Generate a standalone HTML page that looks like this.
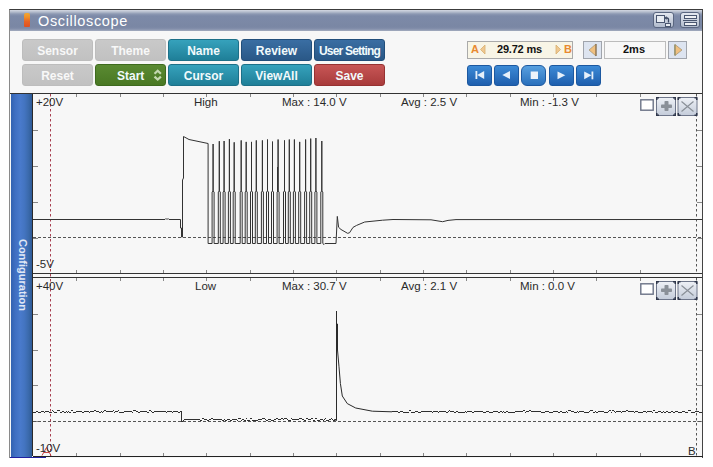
<!DOCTYPE html>
<html><head><meta charset="utf-8">
<style>
*{margin:0;padding:0;box-sizing:border-box}
html,body{width:713px;height:467px;background:#fff;overflow:hidden;font-family:"Liberation Sans",sans-serif;position:relative}
.abs{position:absolute}
#win{position:absolute;left:9px;top:9px;width:694px;height:449px;background:#f7f7f7;border-left:1px solid #8a8a8a;border-right:1px solid #444;border-top:1px solid #3c3c3c}
#title{position:absolute;left:10px;top:10px;width:692px;height:21px;background:linear-gradient(#d4d8e2 0px,#b4bccc 2px,#8c98b2 4px,#7d8aa8 6px,#7a87a4 17px,#8490ac 19px,#a4acbe 21px)}
#title .t{position:absolute;left:28px;top:3px;font-size:14.5px;color:#fff;letter-spacing:0.65px}
.btn{position:absolute;width:71px;height:22px;border-radius:3px;color:#f2fafc;font-weight:bold;font-size:12px;text-align:center;line-height:22px}
.gray{background:linear-gradient(#c9c9c9,#c1c1c1);color:#f8f8f8;border:1px solid #bdbdbd}
.teal{background:linear-gradient(#36a2bc,#1f7f98);border:1px solid #1d7088}
.blue{background:linear-gradient(#3a6ea3,#2a5887);border:1px solid #224e7a}
.green{background:linear-gradient(#5a8a32,#497823);border:1px solid #3e6a1e}
.red{background:linear-gradient(#c85656,#a83b3b);border:1px solid #963232}
.nav{position:absolute;top:64.5px;width:25px;height:21px;border-radius:3px;background:linear-gradient(#3c8ad6,#1f5fae);border:1px solid #1c58a0}
.lbl{position:absolute;font-size:11.5px;color:#2a2a2a;line-height:11px;white-space:nowrap}
.tb{position:absolute;top:2px;width:20px;height:16px;border:1px solid #5a6680;border-radius:3px;background:linear-gradient(#e4e8f0,#b0bacc)}
</style></head><body>
<div id="win"></div>
<div id="title"><div class="abs" style="left:14px;top:3px;width:6px;height:14px;background:linear-gradient(#f4a830 0%,#f09028 30%,#e86424 60%,#e05020 100%);border-radius:2px 2px 1px 1px"></div><div class="t">Oscilloscope</div>
 <div class="tb" style="left:643px;width:21px"><div class="abs" style="left:2px;top:2px;width:9px;height:8px;border:1px solid #4a5670;background:#e8ecf2"></div><div class="abs" style="left:11px;top:10px;width:6px;height:4px;border:1px solid #4a5670;background:#e8ecf2"></div><svg class="abs" style="left:0;top:0" width="21" height="16"><path d="M14.5,9.5 L14.5,6.5 Q14.5,5 13,5 L12,5" fill="none" stroke="#3a4660" stroke-width="1.3"/><path d="M12.5,3 L10.5,5 L12.5,7 Z" fill="#3a4660"/></svg></div>
 <div class="tb" style="left:670px;width:20px"><div class="abs" style="left:3px;top:2px;width:13px;height:4px;border:1px solid #4a5670;background:#eef0f4"></div><div class="abs" style="left:2px;top:7px;width:14px;height:1px;background:#4a5670"></div><div class="abs" style="left:3px;top:9px;width:13px;height:4px;border:1px solid #4a5670;background:#eef0f4"></div></div>
</div>

<div class="btn gray" style="left:22px;top:39px">Sensor</div>
<div class="btn gray" style="left:95px;top:39px">Theme</div>
<div class="btn teal" style="left:168px;top:39px">Name</div>
<div class="btn blue" style="left:241px;top:39px">Review</div>
<div class="btn blue" style="left:314px;top:39px;letter-spacing:-0.8px">User Setting</div>
<div class="btn gray" style="left:22px;top:64px">Reset</div>
<div class="btn green" style="left:95px;top:64px;text-align:left;padding-left:21px">Start</div><svg class="abs" style="left:0;top:0" width="200" height="90"><path d="M154.5,73.8 L157.7,70.8 L160.9,73.8 M154.5,76.6 L157.7,79.6 L160.9,76.6" fill="none" stroke="#c4d8b0" stroke-width="2.2"/></svg>
<div class="btn teal" style="left:168px;top:64px">Cursor</div>
<div class="btn teal" style="left:241px;top:64px">ViewAll</div>
<div class="btn red" style="left:314px;top:64px">Save</div>

<div class="abs" style="left:467px;top:41px;width:106px;height:18px;background:#f8f5e6;border:1px solid #aaaaaa"></div>
<div class="abs" style="left:583px;top:41px;width:19px;height:18px;background:#dde4f0;border:1px solid #a0a4ac"></div>
<div class="abs" style="left:604px;top:41px;width:62px;height:18px;background:#f8f8f8;border:1px solid #bcbcbc"></div>
<div class="abs" style="left:668px;top:41px;width:19px;height:18px;background:#dde4f0;border:1px solid #a0a4ac"></div>
<div class="abs" style="left:471px;top:44px;font-size:11px;font-weight:bold;color:#e88a30;line-height:11px">A</div>
<div class="abs" style="left:497px;top:44px;font-size:11px;font-weight:bold;color:#111;line-height:11px;letter-spacing:-0.2px">29.72 ms</div>
<div class="abs" style="left:564px;top:44px;font-size:11px;font-weight:bold;color:#e88a30;line-height:11px">B</div>
<div class="abs" style="left:623px;top:44px;font-size:11px;font-weight:bold;color:#111;line-height:11px">2ms</div>
<svg class="abs" style="left:0;top:0" width="713" height="90">
 <path d="M485,45 L480.5,49.5 L485,54 Z" fill="#f0c890" stroke="#d8b070" stroke-width="0.8"/>
 <path d="M556,45 L560.5,49.5 L556,54 Z" fill="#f0c890" stroke="#d8b070" stroke-width="0.8"/>
 <path d="M596,44 L589,50 L596,56 Z" fill="#f0c080" stroke="#a09070" stroke-width="0.7"/><rect x="595.5" y="44" width="1" height="12" fill="#7a6040"/>
 <path d="M675,44.5 L682,50 L675,55.5 Z" fill="#f0c080" stroke="#a09070" stroke-width="0.7"/><rect x="674.3" y="44.5" width="1.2" height="11" fill="#8a8a60"/>
</svg>

<div class="nav" style="left:467px"></div>
<div class="nav" style="left:494px"></div>
<div class="nav" style="left:521px;border-radius:6px;background:linear-gradient(#58a0e0,#2a70bc)"></div>
<div class="nav" style="left:549px"></div>
<div class="nav" style="left:576px"></div>
<svg class="abs" style="left:0;top:0" width="713" height="90">
 <rect x="475.5" y="71" width="1.8" height="8" fill="#e6f0fa"/>
 <path d="M484.2,71 L477.2,75 L484.2,79 Z" fill="#e6f0fa"/>
 <path d="M510,71 L502.3,75 L510,79 Z" fill="#e6f0fa"/>
 <rect x="530.7" y="71.5" width="7.3" height="7.5" fill="#eef4fb"/>
 <path d="M557.5,71.5 L565.3,75.3 L557.5,79.3 Z" fill="#e6f0fa"/>
 <path d="M584.2,71.5 L591.5,75.3 L584.2,79.3 Z" fill="#e6f0fa"/>
 <rect x="591.5" y="71.5" width="1.8" height="7.8" fill="#e6f0fa"/>
</svg>

<!-- chart panel -->
<div class="abs" style="left:10px;top:93px;width:692px;height:1px;background:#333"></div>
<div class="abs" style="left:11px;top:94px;width:21px;height:363px;background:linear-gradient(90deg,#3262b0 0%,#3f6fc2 20%,#497acb 45%,#4374c0 65%,#3a69aa 85%,#2e5a96 100%)"></div>
<div class="abs" style="left:32px;top:94px;width:1px;height:362px;background:#2a2a2a"></div>
<div class="abs" style="left:11px;top:240px;width:21px;height:71px;"><div style="position:absolute;left:11.5px;top:34.5px;transform:translate(-50%,-50%) rotate(90deg);font-size:11px;font-weight:bold;color:#e0e8f6;white-space:nowrap;letter-spacing:0px">Configuration</div></div>
<svg class="abs" style="left:0;top:0" width="713" height="467" viewBox="0 0 713 467">
 <rect x="33" y="94" width="669" height="179" fill="#f7f7f7"/>
 <rect x="33" y="278" width="669" height="178" fill="#f7f7f7"/>
 <rect x="33" y="273" width="669" height="1" fill="#333"/>
 <rect x="33" y="277" width="669" height="1" fill="#333"/>
 <rect x="33" y="456" width="670" height="1" fill="#222"/>
 <rect x="10" y="457" width="36" height="1" fill="#2020a0"/>
<rect x="76" y="94" width="1" height="3" fill="#888"/>
<rect x="76" y="270" width="1" height="3" fill="#888"/>
<rect x="76" y="278" width="1" height="3" fill="#888"/>
<rect x="76" y="453" width="1" height="3" fill="#888"/>
<rect x="120" y="94" width="1" height="3" fill="#888"/>
<rect x="120" y="270" width="1" height="3" fill="#888"/>
<rect x="120" y="278" width="1" height="3" fill="#888"/>
<rect x="120" y="453" width="1" height="3" fill="#888"/>
<rect x="163" y="94" width="1" height="3" fill="#888"/>
<rect x="163" y="270" width="1" height="3" fill="#888"/>
<rect x="163" y="278" width="1" height="3" fill="#888"/>
<rect x="163" y="453" width="1" height="3" fill="#888"/>
<rect x="206" y="94" width="1" height="3" fill="#888"/>
<rect x="206" y="270" width="1" height="3" fill="#888"/>
<rect x="206" y="278" width="1" height="3" fill="#888"/>
<rect x="206" y="453" width="1" height="3" fill="#888"/>
<rect x="250" y="94" width="1" height="3" fill="#888"/>
<rect x="250" y="270" width="1" height="3" fill="#888"/>
<rect x="250" y="278" width="1" height="3" fill="#888"/>
<rect x="250" y="453" width="1" height="3" fill="#888"/>
<rect x="293" y="94" width="1" height="3" fill="#888"/>
<rect x="293" y="270" width="1" height="3" fill="#888"/>
<rect x="293" y="278" width="1" height="3" fill="#888"/>
<rect x="293" y="453" width="1" height="3" fill="#888"/>
<rect x="336" y="94" width="1" height="3" fill="#888"/>
<rect x="336" y="270" width="1" height="3" fill="#888"/>
<rect x="336" y="278" width="1" height="3" fill="#888"/>
<rect x="336" y="453" width="1" height="3" fill="#888"/>
<rect x="380" y="94" width="1" height="3" fill="#888"/>
<rect x="380" y="270" width="1" height="3" fill="#888"/>
<rect x="380" y="278" width="1" height="3" fill="#888"/>
<rect x="380" y="453" width="1" height="3" fill="#888"/>
<rect x="423" y="94" width="1" height="3" fill="#888"/>
<rect x="423" y="270" width="1" height="3" fill="#888"/>
<rect x="423" y="278" width="1" height="3" fill="#888"/>
<rect x="423" y="453" width="1" height="3" fill="#888"/>
<rect x="466" y="94" width="1" height="3" fill="#888"/>
<rect x="466" y="270" width="1" height="3" fill="#888"/>
<rect x="466" y="278" width="1" height="3" fill="#888"/>
<rect x="466" y="453" width="1" height="3" fill="#888"/>
<rect x="510" y="94" width="1" height="3" fill="#888"/>
<rect x="510" y="270" width="1" height="3" fill="#888"/>
<rect x="510" y="278" width="1" height="3" fill="#888"/>
<rect x="510" y="453" width="1" height="3" fill="#888"/>
<rect x="553" y="94" width="1" height="3" fill="#888"/>
<rect x="553" y="270" width="1" height="3" fill="#888"/>
<rect x="553" y="278" width="1" height="3" fill="#888"/>
<rect x="553" y="453" width="1" height="3" fill="#888"/>
<rect x="596" y="94" width="1" height="3" fill="#888"/>
<rect x="596" y="270" width="1" height="3" fill="#888"/>
<rect x="596" y="278" width="1" height="3" fill="#888"/>
<rect x="596" y="453" width="1" height="3" fill="#888"/>
<rect x="640" y="94" width="1" height="3" fill="#888"/>
<rect x="640" y="270" width="1" height="3" fill="#888"/>
<rect x="640" y="278" width="1" height="3" fill="#888"/>
<rect x="640" y="453" width="1" height="3" fill="#888"/>
<rect x="33" y="130" width="5" height="1" fill="#888"/>
<rect x="697" y="130" width="5" height="1" fill="#888"/>
<rect x="33" y="166" width="5" height="1" fill="#888"/>
<rect x="697" y="166" width="5" height="1" fill="#888"/>
<rect x="33" y="202" width="5" height="1" fill="#888"/>
<rect x="697" y="202" width="5" height="1" fill="#888"/>
<rect x="33" y="238" width="5" height="1" fill="#888"/>
<rect x="697" y="238" width="5" height="1" fill="#888"/>
<rect x="33" y="314" width="5" height="1" fill="#888"/>
<rect x="697" y="314" width="5" height="1" fill="#888"/>
<rect x="33" y="350" width="5" height="1" fill="#888"/>
<rect x="697" y="350" width="5" height="1" fill="#888"/>
<rect x="33" y="385" width="5" height="1" fill="#888"/>
<rect x="697" y="385" width="5" height="1" fill="#888"/>
<rect x="33" y="421" width="5" height="1" fill="#888"/>
<rect x="697" y="421" width="5" height="1" fill="#888"/>
 <line x1="33" y1="237.5" x2="702" y2="237.5" stroke="#555" stroke-dasharray="3,2"/>
 <line x1="33" y1="421.5" x2="702" y2="421.5" stroke="#555" stroke-dasharray="3,2"/>
 <line x1="50.5" y1="94" x2="50.5" y2="456" stroke="#a84050" stroke-dasharray="2.5,2.5"/>
 <rect x="33" y="273" width="669" height="1" fill="#333"/>
 <rect x="33" y="277" width="669" height="1" fill="#333"/>
 <line x1="696.5" y1="94" x2="696.5" y2="273" stroke="#555" stroke-dasharray="2.5,2.5"/>
 <line x1="696.5" y1="278" x2="696.5" y2="456" stroke="#555" stroke-dasharray="2.5,2.5"/>
 <path d="M33,219.5 165,219.5 166,218.5 167,219.5 168,218.5 169,219.5 180.5,219.5 180.5,228 181.5,228 181.5,237 182.5,237 182.5,180 183.5,178 183.5,136.5 189,139.5 208.1,143.5 208.1,243.5 212.1,243.5 212.1,192 213.1,191 213.1,144 213.1,191 214.1,192 214.1,243.5 218.3,243.5 218.3,192 219.3,191 219.3,141.2 219.3,191 220.3,192 220.3,243.5 223.1,243.5 223.1,192 224.1,191 224.1,141 224.1,191 225.1,192 225.1,243.5 228.4,243.5 228.4,192 229.4,191 229.4,139.1 229.4,191 230.4,192 230.4,243.5 233.2,243.5 233.2,192 234.2,191 234.2,142.3 234.2,191 235.2,192 235.2,243.5 240.2,243.5 240.2,192 241.2,191 241.2,140.4 241.2,191 242.2,192 242.2,243.5 245.2,243.5 245.2,192 246.2,191 246.2,141.9 246.2,191 247.2,192 247.2,243.5 250.5,243.5 250.5,192 251.5,191 251.5,141.9 251.5,191 252.5,192 252.5,243.5 255.3,243.5 255.3,192 256.3,191 256.3,140.4 256.3,191 257.3,192 257.3,243.5 261.4,243.5 261.4,192 262.4,191 262.4,140.4 262.4,191 263.4,192 263.4,243.5 266.5,243.5 266.5,192 267.5,191 267.5,139.5 267.5,191 268.5,192 268.5,243.5 271.5,243.5 271.5,192 272.5,191 272.5,141.6 272.5,191 273.5,192 273.5,243.5 277.1,243.5 277.1,192 278.1,191 278.1,139.5 278.1,191 279.1,192 279.1,243.5 283.5,243.5 283.5,192 284.5,191 284.5,140.4 284.5,191 285.5,192 285.5,243.5 288.3,243.5 288.3,192 289.3,191 289.3,139.5 289.3,191 290.3,192 290.3,243.5 293.4,243.5 293.4,192 294.4,191 294.4,139.5 294.4,191 295.4,192 295.4,243.5 298.7,243.5 298.7,192 299.7,191 299.7,141.9 299.7,191 300.7,192 300.7,243.5 304.6,243.5 304.6,192 305.6,191 305.6,139.5 305.6,191 306.6,192 306.6,243.5 309.7,243.5 309.7,192 310.7,191 310.7,138.6 310.7,191 311.7,192 311.7,243.5 314.9,243.5 314.9,192 315.9,191 315.9,138 315.9,191 316.9,192 316.9,243.5 320.8,243.5 320.8,192 321.8,191 321.8,141 321.8,191 322.8,192 322.8,243.5 324,244.5 325,243.5 336,243.5 337.3,216.4 338.6,227.3 341,229.5 347.6,233.3 349.5,232.8 353,227.4 356.6,225.4 364.7,222 382.6,220.2 393,219.5 431,219.8 442.6,221.7 448,220.4 456,219.6 702,219.5 M277.5,167 L277.5,192" fill="none" stroke="#333" stroke-width="1"/>
 <path d="M334,419.5 L336.5,420.5 L336.5,311 L336.5,324 L337.5,324 L337.5,350 L339,366.8 L340.4,383.5 L342.3,396 L347.3,403.6 L355.7,408 L372.4,411.2 L392,411.8" fill="none" stroke="#2a2a2a" stroke-width="1"/>
 <path d="M33,412.5 L36,412.5 M36,411.5 L38,411.5 M38,412.5 L41,412.5 M41,411.5 L43,411.5 L44,411.5 M44,412.5 L45,412.5 M45,411.5 L47,411.5 L49,411.5 M49,412.5 L52,412.5 M52,410.5 L53,410.5 M53,411.5 L54,411.5 M54,412.5 L56,412.5 L57,412.5 M57,410.5 L60,410.5 M60,412.5 L61,412.5 L62,412.5 M62,411.5 L63,411.5 L64,411.5 M64,412.5 L66,412.5 M66,411.5 L67,411.5 M67,412.5 L68,412.5 M68,411.5 L69,411.5 M69,412.5 L71,412.5 M71,410.5 L73,410.5 M73,412.5 L74,412.5 L76,412.5 M76,411.5 L79,411.5 L82,411.5 M82,412.5 L84,412.5 M84,411.5 L86,411.5 L88,411.5 L89,411.5 M89,412.5 L90,412.5 M90,411.5 L91,411.5 L93,411.5 L94,411.5 M94,410.5 L96,410.5 M96,411.5 L99,411.5 M99,412.5 L101,412.5 M101,411.5 L102,411.5 M102,412.5 L103,412.5 M103,411.5 L104,411.5 M104,410.5 L106,410.5 M106,411.5 L108,411.5 L110,411.5 L111,411.5 L113,411.5 M113,410.5 L114,410.5 M114,412.5 L115,412.5 M115,411.5 L118,411.5 M118,410.5 L119,410.5 M119,412.5 L122,412.5 L124,412.5 M124,411.5 L125,411.5 L127,411.5 L128,411.5 L129,411.5 L132,411.5 M132,412.5 L133,412.5 M133,410.5 L136,410.5 M136,411.5 L138,411.5 M138,412.5 L140,412.5 M140,411.5 L141,411.5 L143,411.5 L144,411.5 L147,411.5 M147,412.5 L149,412.5 M149,410.5 L151,410.5 M151,411.5 L152,411.5 M152,412.5 L154,412.5 M154,411.5 L157,411.5 L160,411.5 L162,411.5 L164,411.5 L166,411.5 M166,412.5 L167,412.5 M167,411.5 L170,411.5 L172,411.5 M172,412.5 L173,412.5 M173,411.5 L175,411.5 L178,411.5 M178,412.5 L180,412.5 M180,411.5 L181,411.5 M181.5,411 L181.5,421.5 M181,421.5 L183,421.5 M183,420.5 L184,420.5 M184,419.5 L185,419.5 L187,419.5 L189,419.5 L191,419.5 L193,419.5 L195,419.5 L198,419.5 L200,419.5 M200,420.5 L202,420.5 M202,418.5 L204,418.5 M204,419.5 L207,419.5 M207,420.5 L209,420.5 M209,419.5 L211,419.5 M211,418.5 L213,418.5 M213,419.5 L214,419.5 L216,419.5 L218,419.5 L221,419.5 L222,419.5 M222,420.5 L224,420.5 M224,419.5 L225,419.5 M225,420.5 L227,420.5 M227,419.5 L230,419.5 M230,420.5 L232,420.5 M232,419.5 L235,419.5 L237,419.5 M237,420.5 L238,420.5 M238,418.5 L241,418.5 M241,420.5 L242,420.5 M242,419.5 L243,419.5 L244,419.5 M244,420.5 L245,420.5 L246,420.5 M246,418.5 L247,418.5 M247,420.5 L250,420.5 M250,418.5 L252,418.5 M252,420.5 L255,420.5 L256,420.5 L258,420.5 M258,419.5 L260,419.5 L262,419.5 M262,418.5 L265,418.5 M265,419.5 L266,419.5 M266,420.5 L268,420.5 M268,419.5 L271,419.5 M271,420.5 L274,420.5 M274,419.5 L276,419.5 M276,418.5 L278,418.5 M278,419.5 L281,419.5 M281,418.5 L283,418.5 M283,419.5 L284,419.5 M284,418.5 L287,418.5 M287,419.5 L288,419.5 M288,420.5 L291,420.5 M291,418.5 L292,418.5 M292,419.5 L294,419.5 L297,419.5 L299,419.5 M299,418.5 L302,418.5 M302,419.5 L304,419.5 M304,420.5 L306,420.5 M306,418.5 L308,418.5 M308,419.5 L309,419.5 L311,419.5 M311,418.5 L313,418.5 M313,420.5 L315,420.5 M315,418.5 L317,418.5 M317,420.5 L319,420.5 L320,420.5 M320,419.5 L323,419.5 M323,420.5 L324,420.5 M324,419.5 L325,419.5 M325,418.5 L326,418.5 M326,420.5 L329,420.5 M329,419.5 L331,419.5 M331,418.5 L332,418.5 M332,419.5 L333,419.5 M333,420.5 L335,420.5 M335,419.5 L336,419.5 M392,411.5 L395,411.5 L398,411.5 M398,412.5 L399,412.5 L400,412.5 M400,411.5 L403,411.5 M403,412.5 L406,412.5 L409,412.5 M409,410.5 L411,410.5 M411,412.5 L414,412.5 L415,412.5 M415,411.5 L417,411.5 L418,411.5 M418,412.5 L421,412.5 M421,411.5 L423,411.5 L425,411.5 L427,411.5 L429,411.5 L430,411.5 L432,411.5 M432,412.5 L433,412.5 M433,411.5 L434,411.5 L436,411.5 L438,411.5 M438,412.5 L439,412.5 M439,411.5 L442,411.5 L444,411.5 L446,411.5 M446,412.5 L447,412.5 L448,412.5 M448,411.5 L449,411.5 M449,410.5 L450,410.5 M450,411.5 L452,411.5 L454,411.5 M454,412.5 L455,412.5 L456,412.5 M456,411.5 L457,411.5 L458,411.5 M458,412.5 L460,412.5 L463,412.5 L464,412.5 L465,412.5 M465,411.5 L466,411.5 M466,412.5 L467,412.5 M467,411.5 L470,411.5 L472,411.5 M472,412.5 L473,412.5 L474,412.5 M474,411.5 L477,411.5 L479,411.5 L481,411.5 L482,411.5 L483,411.5 M483,412.5 L486,412.5 M486,411.5 L489,411.5 M489,412.5 L490,412.5 L493,412.5 M493,411.5 L495,411.5 L496,411.5 L498,411.5 M498,412.5 L500,412.5 M500,411.5 L501,411.5 L502,411.5 M502,412.5 L503,412.5 M503,411.5 L504,411.5 M504,412.5 L506,412.5 M506,411.5 L508,411.5 M508,412.5 L510,412.5 L513,412.5 L515,412.5 M515,411.5 L516,411.5 L518,411.5 L519,411.5 L520,411.5 L522,411.5 L523,411.5 M523,410.5 L525,410.5 M525,412.5 L526,412.5 M526,411.5 L529,411.5 M529,410.5 L531,410.5 M531,411.5 L533,411.5 L535,411.5 L537,411.5 L540,411.5 L541,411.5 M541,412.5 L543,412.5 L544,412.5 L545,412.5 M545,411.5 L547,411.5 L549,411.5 M549,412.5 L551,412.5 L553,412.5 M553,411.5 L556,411.5 L558,411.5 M558,412.5 L559,412.5 L560,412.5 M560,411.5 L562,411.5 M562,412.5 L564,412.5 L566,412.5 M566,411.5 L567,411.5 M567,412.5 L568,412.5 M568,410.5 L569,410.5 L571,410.5 M571,411.5 L572,411.5 L574,411.5 M574,412.5 L575,412.5 L577,412.5 M577,411.5 L578,411.5 M578,412.5 L579,412.5 M579,411.5 L580,411.5 L581,411.5 L583,411.5 L584,411.5 M584,412.5 L586,412.5 L588,412.5 L589,412.5 M589,411.5 L590,411.5 M590,410.5 L593,410.5 M593,412.5 L595,412.5 M595,411.5 L596,411.5 M596,412.5 L598,412.5 M598,411.5 L599,411.5 L602,411.5 L603,411.5 L604,411.5 M604,412.5 L606,412.5 L608,412.5 M608,411.5 L609,411.5 M609,410.5 L611,410.5 M611,412.5 L612,412.5 M612,410.5 L614,410.5 M614,411.5 L615,411.5 M615,412.5 L616,412.5 M616,411.5 L619,411.5 L620,411.5 L621,411.5 M621,412.5 L622,412.5 M622,411.5 L623,411.5 L624,411.5 L626,411.5 M626,410.5 L628,410.5 M628,411.5 L630,411.5 L631,411.5 L633,411.5 L634,411.5 M634,412.5 L635,412.5 M635,411.5 L636,411.5 L638,411.5 M638,412.5 L640,412.5 L643,412.5 M643,411.5 L644,411.5 L646,411.5 M646,412.5 L647,412.5 M647,411.5 L649,411.5 L650,411.5 L652,411.5 M652,412.5 L653,412.5 M653,410.5 L655,410.5 M655,412.5 L658,412.5 M658,411.5 L660,411.5 L661,411.5 M661,412.5 L663,412.5 M663,411.5 L664,411.5 M664,412.5 L666,412.5 M666,411.5 L668,411.5 M668,412.5 L670,412.5 L671,412.5 M671,411.5 L673,411.5 M673,412.5 L675,412.5 M675,411.5 L678,411.5 M678,412.5 L681,412.5 L682,412.5 M682,411.5 L683,411.5 L685,411.5 M685,412.5 L688,412.5 M688,410.5 L691,410.5 M691,412.5 L693,412.5 L695,412.5 M695,411.5 L698,411.5 L699,411.5 M699,412.5 L700,412.5 L702,412.5" fill="none" stroke="#303030" stroke-width="1" shape-rendering="crispEdges"/>
 <path d="M42,455.5 L46.5,447.5 L51,455.5 M44,452.5 L49,452.5" fill="none" stroke="#c03030" stroke-width="0.9"/>
 <!-- chart controls -->
 <g id="ctl">
 <rect x="640.8" y="99.8" width="12.4" height="10.4" fill="#fff" stroke="#6a7286" stroke-width="1.4"/>
 <rect x="656.5" y="97.5" width="19" height="18" rx="1" fill="url(#gbtn)" stroke="#6e768a" stroke-width="1"/>
 <path d="M656,97h3v1.5h-1.5v1.5h-1.5z M676,97h-3v1.5h1.5v1.5h1.5z M656,116h3v-1.5h-1.5v-1.5h-1.5z M676,116h-3v-1.5h1.5v-1.5h1.5z" fill="#2e364a"/>
 <rect x="661" y="104.5" width="11" height="3.5" rx="0.8" fill="#8a9098"/>
 <rect x="664.5" y="101" width="4" height="10" rx="0.8" fill="#8a9098"/>
 <rect x="678" y="97.5" width="19" height="18" rx="1" fill="url(#gbtn)" stroke="#6e768a" stroke-width="1"/>
 <path d="M677.5,97h3v1.5h-1.5v1.5h-1.5z M697.5,97h-3v1.5h1.5v1.5h1.5z M677.5,116h3v-1.5h-1.5v-1.5h-1.5z M697.5,116h-3v-1.5h1.5v-1.5h1.5z" fill="#2e364a"/>
 <path d="M681.5,101.5 L693.5,111.5 M693.5,101.5 L681.5,111.5" stroke="#8a9098" stroke-width="1.2"/>
 </g>
 <use href="#ctl" y="184"/>
 <defs><linearGradient id="gbtn" x1="0" y1="0" x2="0" y2="1"><stop offset="0" stop-color="#eef1f6"/><stop offset="1" stop-color="#c4ccda"/></linearGradient></defs>
</svg>
<div class="lbl" style="left:36px;top:96.5px">+20V</div>
<div class="lbl" style="left:36px;top:258.5px">-5V</div>
<div class="lbl" style="left:36px;top:280.5px">+40V</div>
<div class="lbl" style="left:36px;top:442.5px">-10V</div>
<div class="lbl" style="left:194px;top:96.5px">High</div>
<div class="lbl" style="left:195px;top:280.5px">Low</div>
<div class="lbl" style="left:282px;top:96.5px">Max : 14.0 V</div>
<div class="lbl" style="left:282px;top:280.5px">Max : 30.7 V</div>
<div class="lbl" style="left:401px;top:96.5px">Avg : 2.5 V</div>
<div class="lbl" style="left:401px;top:280.5px">Avg : 2.1 V</div>
<div class="lbl" style="left:520px;top:96.5px">Min : -1.3 V</div>
<div class="lbl" style="left:520px;top:280.5px">Min : 0.0 V</div>
<div class="lbl" style="left:688px;top:446px">B</div>
</body></html>
